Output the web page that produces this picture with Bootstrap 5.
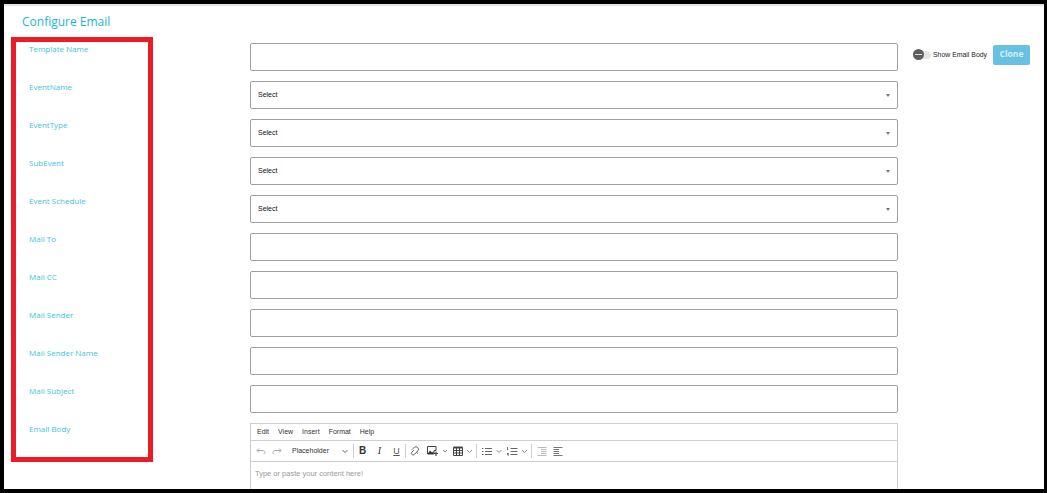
<!DOCTYPE html>
<html lang="en">
  <head>
    <meta charset="UTF-8" />
    <title>Configure Email</title>
    <link href="https://cdn.jsdelivr.net/npm/bootstrap@5.3.0/dist/css/bootstrap.min.css" rel="stylesheet" />
    <style>
      html, body { height: 493px; overflow: hidden; background: #000; }
      .shot-frame {
        position: relative;
        height: 485px;
        margin: 4px 3px 4px 4px;
        background: #fff;
        border-top: 2px solid #e4e4e4;
        overflow: hidden;
        font-family: "Open Sans", "Liberation Sans", sans-serif;
      }
      .page-title { color: #1bb6d6; font-size: 12px; line-height: 18px; margin: 0; padding: 7px 0 0 18px; height: 37px; font-weight: 400; }
      .form-area { padding-left: 25px; }
      .form-line { height: 38px; }
      .field-label { width: 221px; flex: none; color: #3cc4de; font-size: 8px; line-height: 12px; }
      .field-box {
        width: 648px; height: 28px; flex: none;
        border: 1px solid #a0a0a0; border-radius: 2px; background: #fff;
        font-family: "Liberation Sans", sans-serif; font-size: 7px; color: #111; padding: 0 7px;
      }
      .caret-down { width: 0; height: 0; border-left: 2.5px solid transparent; border-right: 2.5px solid transparent; border-top: 3px solid #777; margin-right: 0; }
      .clone-side { margin-left: 15px; margin-top: 1px; height: 21px; }
      .toggle-track { width: 18px; height: 8px; background: #e6e6e6; border-radius: 4px; position: relative; margin-right: 2px; }
      .toggle-knob { position: absolute; left: 0; top: -1.5px; width: 11px; height: 11px; border-radius: 50%; background: #5d5d5d; }
      .toggle-knob::after { content: ""; position: absolute; left: 2px; right: 2px; top: 5px; height: 1px; background: #ddd; }
      .toggle-text { font-family: "Liberation Sans", sans-serif; font-size: 6.9px; color: #222; margin-right: 6px; padding-top: 1px; white-space: nowrap; }
      .clone-btn { background: #68c1e3; border: 0; border-radius: 2px; color: #d8eef7; font-size: 8.5px; font-weight: 700; width: 37px; height: 20px; padding: 0; }
      .editor-box { margin-left: 221px; width: 648px; height: 80px; border: 1px solid #cfcfcf; border-bottom: 0; font-family: "Liberation Sans", sans-serif; }
      .editor-menu { height: 17px; border-bottom: 1px solid #cfcfcf; font-size: 7px; color: #333; padding-left: 6px; gap: 9px; }
      .editor-tools { height: 21px; border-bottom: 1px solid #cfcfcf; padding-left: 1px; color: #444; }
      .editor-tools svg { display: block; flex: none; }
      .tool-sep { width: 1px; height: 14px; background: #cfcfcf; flex: none; }
      .tool-letter { width: 17px; flex: none; text-align: center; font-size: 9px; line-height: 12px; color: #333; }
      .tool-bold { font-weight: 700; font-size: 10px; }
      .tool-italic { font-family: "Liberation Serif", serif; font-style: italic; font-size: 10px; }
      .tool-under { text-decoration: underline; color: #555; }
      .format-name { font-size: 7px; color: #333; width: 49px; margin-left: 6px; flex: none; }
      .editor-hint { font-size: 7.5px; color: #999; padding: 6px 0 0 4px; }
      .red-mark { position: absolute; left: 7px; top: 31px; width: 142px; height: 425px; border: 5px solid #ed1c24; pointer-events: none; }
    </style>
  </head>
  <body>
    <div class="shot-frame">
      <h5 class="page-title">Configure Email</h5>
      <div class="form-area">
        <div class="form-line d-flex align-items-start">
          <div class="field-label">Template Name</div>
          <div class="field-box"></div>
          <div class="clone-side d-flex align-items-center">
            <span class="toggle-track"><span class="toggle-knob"></span></span>
            <span class="toggle-text">Show Email Body</span>
            <button class="btn clone-btn" type="button">Clone</button>
          </div>
        </div>
        <div class="form-line d-flex align-items-start">
          <div class="field-label">EventName</div>
          <div class="field-box d-flex align-items-center justify-content-between"><span>Select</span><span class="caret-down"></span></div>
        </div>
        <div class="form-line d-flex align-items-start">
          <div class="field-label">EventType</div>
          <div class="field-box d-flex align-items-center justify-content-between"><span>Select</span><span class="caret-down"></span></div>
        </div>
        <div class="form-line d-flex align-items-start">
          <div class="field-label">SubEvent</div>
          <div class="field-box d-flex align-items-center justify-content-between"><span>Select</span><span class="caret-down"></span></div>
        </div>
        <div class="form-line d-flex align-items-start">
          <div class="field-label">Event Schedule</div>
          <div class="field-box d-flex align-items-center justify-content-between"><span>Select</span><span class="caret-down"></span></div>
        </div>
        <div class="form-line d-flex align-items-start">
          <div class="field-label">Mail To</div>
          <div class="field-box"></div>
        </div>
        <div class="form-line d-flex align-items-start">
          <div class="field-label">Mail CC</div>
          <div class="field-box"></div>
        </div>
        <div class="form-line d-flex align-items-start">
          <div class="field-label">Mail Sender</div>
          <div class="field-box"></div>
        </div>
        <div class="form-line d-flex align-items-start">
          <div class="field-label">Mail Sender Name</div>
          <div class="field-box"></div>
        </div>
        <div class="form-line d-flex align-items-start">
          <div class="field-label">Mail Subject</div>
          <div class="field-box"></div>
        </div>
        <div class="field-label position-absolute">Email Body</div>
        <div class="editor-box">
          <div class="editor-menu d-flex align-items-center"><span>Edit</span><span>View</span><span>Insert</span><span>Format</span><span>Help</span></div>
          <div class="editor-tools d-flex align-items-center">
            <!-- undo / redo -->
            <svg width="17" height="14" fill="none" stroke="#aaa" stroke-width="1"><path d="M5 6.500h5c2 0 3 1 3 2.200 0 .7-.3 1.200-.8 1.600M7 4.500 5 6.500l2 2"/></svg>
            <svg width="17" height="14" fill="none" stroke="#aaa" stroke-width="1"><path d="M12 6.500H7c-2 0-3 1-3 2.200 0 .7.300 1.200.8 1.600M10 4.500l2 2-2 2"/></svg>
            <span class="format-name">Placeholder</span>
            <svg width="8" height="14" fill="none" stroke="#666" stroke-width="1"><path d="M1.500 6 4 8.500 6.500 6"/></svg>
            <span class="tool-sep ms-1"></span>
            <span class="tool-letter tool-bold">B</span>
            <span class="tool-letter tool-italic">I</span>
            <span class="tool-letter tool-under">U</span>
            <span class="tool-sep"></span>
            <!-- link -->
            <svg width="18" height="14" fill="none" stroke="#666" stroke-width="1"><path d="M8 6 5.800 8.200a1.700 1.700 0 0 0 2.400 2.400L12 6.800a2.600 2.600 0 0 0-3.600-3.600L6 5.600M10.200 8 12 9.500"/></svg>
            <!-- image -->
            <svg width="16" height="14"><path d="M3.500 2.500h8.500v4H10v3.500H3.500z" fill="#fff" stroke="#444"/><path d="M3.500 10l2.500-3.500 2 2 1.500-1.500V10z" fill="#333"/><path d="M12 7.500v4.500M10 9.500h4" stroke="#444" stroke-width="1.200"/></svg>
            <svg width="9" height="14" fill="none" stroke="#888" stroke-width="1"><path d="M3 6l2 2 2-2"/></svg>
            <!-- table -->
            <svg width="17" height="14" fill="none" stroke="#444" stroke-width="1"><path d="M4.500 3.500h9v8h-9zM4.500 6.500h9M4.500 9h9M7.500 3.500v8M10.500 3.500v8"/><path d="M4.500 3.500h9" stroke-width="2"/></svg>
            <svg width="6" height="14" fill="none" stroke="#888" stroke-width="1"><path d="M1 6l2.500 2.500L6 6"/></svg>
            <span class="tool-sep ms-1"></span>
            <!-- bullet list -->
            <svg width="19" height="14" fill="none" stroke="#666" stroke-width="1"><path d="M8 4.500h7M8 7.500h7M8 10.500h7M5 4.500h1.500M5 7.500h1.500M5 10.500h1.500"/></svg>
            <svg width="8" height="14" fill="none" stroke="#888" stroke-width="1"><path d="M.5 6 3 8.500 5.500 6"/></svg>
            <!-- numbered list -->
            <svg width="17" height="14" fill="none" stroke="#666" stroke-width="1"><path d="M6.500 4.500h7M6.500 7.500h7M6.500 10.500h7M3.500 3v3M3 9.500h1.500l-1 1.500h1.500"/></svg>
            <svg width="6" height="14" fill="none" stroke="#888" stroke-width="1"><path d="M1 6l2.500 2.500L6 6"/></svg>
            <span class="tool-sep ms-1"></span>
            <!-- outdent / indent -->
            <svg width="19" height="14" fill="none" stroke="#bbb" stroke-width="1"><path d="M5.500 3.500h9M9 5.500h5.500M9 7.500h5.500M9 9.500h5.500M5.500 11.500h9"/></svg>
            <svg width="18" height="14" fill="none" stroke="#777" stroke-width="1"><path d="M2.500 3.500h9M2.500 5.500h5.500M2.500 7.500h5.500M2.500 9.500h5.500M2.500 11.500h9"/></svg>
          </div>
          <div class="editor-hint">Type or paste your content here!</div>
        </div>
      </div>
      <div class="red-mark"></div>
    </div>
    <script src="https://cdn.jsdelivr.net/npm/bootstrap@5.3.0/dist/js/bootstrap.bundle.min.js"></script>
  </body>
</html>
